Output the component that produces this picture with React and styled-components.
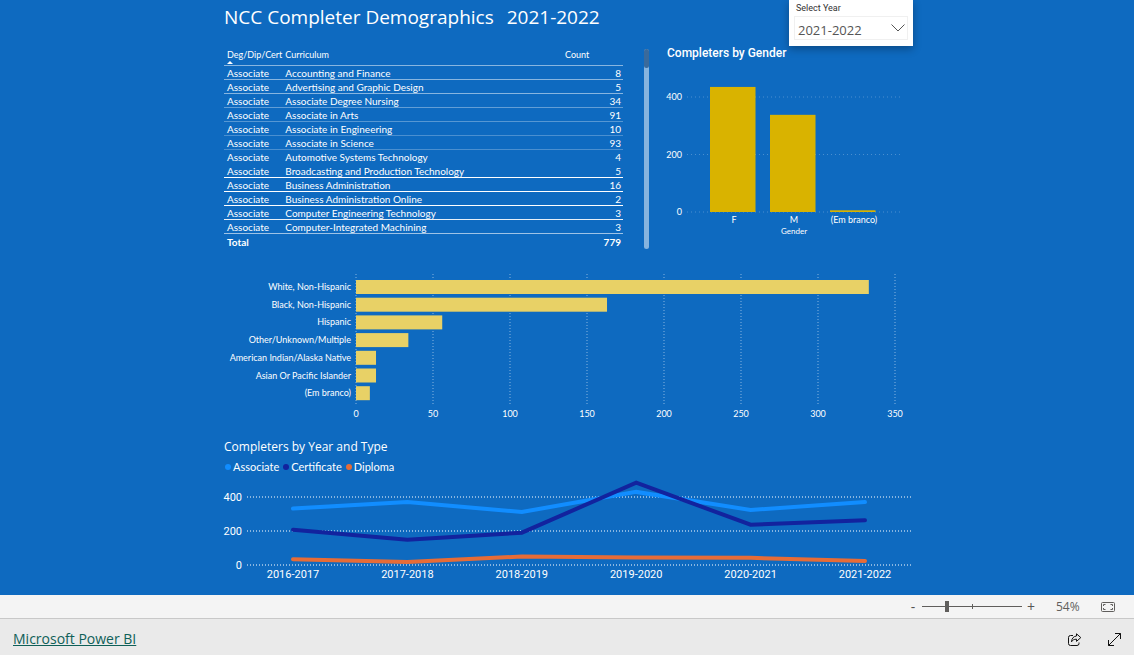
import React, { useState } from 'react';
import styled, { createGlobalStyle } from 'styled-components';

const completers = [
  { name: 'Accounting and Finance', count: 8, line: 0.5 },
  { name: 'Advertising and Graphic Design', count: 5, line: 0.5 },
  { name: 'Associate Degree Nursing', count: 34, line: 0.35 },
  { name: 'Associate in Arts', count: 91, line: 0.3 },
  { name: 'Associate in Engineering', count: 10, line: 0.25 },
  { name: 'Associate in Science', count: 93, line: 0.25 },
  { name: 'Automotive Systems Technology', count: 4, line: 0 },
  { name: 'Broadcasting and Production Technology', count: 5, line: 1 },
  { name: 'Business Administration', count: 16, line: 1 },
  { name: 'Business Administration Online', count: 2, line: 1 },
  { name: 'Computer Engineering Technology', count: 3, line: 0.9 },
  { name: 'Computer-Integrated Machining', count: 3, line: 0.6 },
];

const genders = [
  { label: 'F', value: 435 },
  { label: 'M', value: 338 },
  { label: '(Em branco)', value: 6 },
];

const ethnicities = [
  { label: 'White, Non-Hispanic', value: 333 },
  { label: 'Black, Non-Hispanic', value: 163 },
  { label: 'Hispanic', value: 56 },
  { label: 'Other/Unknown/Multiple', value: 34 },
  { label: 'American Indian/Alaska Native', value: 13 },
  { label: 'Asian Or Pacific Islander', value: 13 },
  { label: '(Em branco)', value: 9 },
];

const years = ['2016-2017', '2017-2018', '2018-2019', '2019-2020', '2020-2021', '2021-2022'];

const series = [
  { label: 'Associate', color: '#118dff', values: [332, 370, 312, 430, 324, 370] },
  { label: 'Certificate', color: '#12239e', values: [208, 148, 190, 484, 237, 263] },
  { label: 'Diploma', color: '#e66c37', values: [34, 18, 50, 44, 42, 24] },
];

const GenderChart = () => {
  const y = (value) => 134 - value * 0.2875;
  return (
    <Chart viewBox="0 0 246 164" role="img" aria-label="Completers by Gender">
      {[0, 200, 400].map((tick) => (
        <g key={tick}>
          <GridLine x1="20" x2="235" y1={y(tick)} y2={y(tick)} $faint />
          <AxisLabel x="15" y={y(tick) + 3} textAnchor="end">{tick}</AxisLabel>
        </g>
      ))}
      {genders.map((item, i) => (
        <g key={item.label}>
          <rect x={43 + i * 60} y={y(item.value)} width="45.5" height={item.value * 0.2875} fill="#d9b300" />
          <AxisLabel x={67 + i * 60} y="145" textAnchor="middle">{item.label}</AxisLabel>
        </g>
      ))}
      <AxisLabel x="127" y="156" textAnchor="middle" $small>Gender</AxisLabel>
    </Chart>
  );
};

const EthnicityChart = () => {
  const x = (value) => 135 + value * 1.54;
  return (
    <Chart viewBox="0 0 692 150" role="img" aria-label="Completers by ethnicity">
      {[0, 50, 100, 150, 200, 250, 300, 350].map((tick) => (
        <g key={tick}>
          <GridLine x1={x(tick)} x2={x(tick)} y1="4" y2="134" />
          <AxisLabel x={x(tick)} y="147" textAnchor="middle">{tick}</AxisLabel>
        </g>
      ))}
      {ethnicities.map((item, i) => (
        <g key={item.label}>
          <rect x="135" y={10 + i * 17.7} width={item.value * 1.54} height="14" fill="#e8d166" />
          <AxisLabel x="130" y={20 + i * 17.7} textAnchor="end">{item.label}</AxisLabel>
        </g>
      ))}
    </Chart>
  );
};

const YearChart = () => {
  const x = (i) => 72 + i * 114.4;
  const y = (value) => 90 - value * 0.17;
  return (
    <Chart viewBox="0 0 692 108" role="img" aria-label="Completers by Year and Type">
      {[400, 200, 0].map((tick) => (
        <g key={tick}>
          <GridLine x1="26" x2="690" y1={y(tick)} y2={y(tick)} $wide />
          <AxisLabel x="21" y={y(tick) + 4} textAnchor="end" $large>{tick}</AxisLabel>
        </g>
      ))}
      {series.map((item) => (
        <SeriesLine
          key={item.label}
          points={item.values.map((value, i) => `${x(i)},${y(value)}`).join(' ')}
          stroke={item.color}
        />
      ))}
      {years.map((year, i) => (
        <AxisLabel key={year} x={x(i)} y="103" textAnchor="middle" $large>{year}</AxisLabel>
      ))}
    </Chart>
  );
};

const App = () => {
  const [year, setYear] = useState('2021-2022');
  const [zoom, setZoom] = useState(54);

  return (
    <Page>
      <GlobalStyle />
      <Canvas>
        <Report>
          <TopRow>
            <Left>
              <Title>
                NCC Completer Demographics <span>{year}</span>
              </Title>
              <TableArea>
                <Table>
                  <thead>
                    <tr>
                      <HeadCell $width="57px">
                        Deg/Dip/Cert
                        <SortMark viewBox="0 0 6 3"><path d="M0 3 3 0l3 3z" /></SortMark>
                      </HeadCell>
                      <HeadCell>Curriculum</HeadCell>
                      <HeadCell $width="61px">Count</HeadCell>
                    </tr>
                  </thead>
                  <tbody>
                    {completers.map((item) => (
                      <tr key={item.name}>
                        <Cell $line={item.line}>Associate</Cell>
                        <Cell $line={item.line}>{item.name}</Cell>
                        <Cell $line={item.line} $right>{item.count}</Cell>
                      </tr>
                    ))}
                  </tbody>
                  <tfoot>
                    <tr>
                      <TotalCell colSpan="2">Total</TotalCell>
                      <TotalCell $right>779</TotalCell>
                    </tr>
                  </tfoot>
                </Table>
                <ScrollTrack><ScrollThumb /></ScrollTrack>
              </TableArea>
            </Left>
            <Right>
              <Slicer>
                <label htmlFor="year">Select Year</label>
                <SelectBox>
                  <select id="year" value={year} onChange={(e) => setYear(e.target.value)}>
                    {years.map((item) => <option key={item}>{item}</option>)}
                  </select>
                  <svg width="14" height="8" viewBox="0 0 14 8"><path d="M.5.5 7 7l6.500-6.500" /></svg>
                </SelectBox>
              </Slicer>
              <GenderTitle>Completers by Gender</GenderTitle>
              <GenderChart />
            </Right>
          </TopRow>
          <EthnicityArea><EthnicityChart /></EthnicityArea>
          <YearTitle>Completers by Year and Type</YearTitle>
          <Legend>
            {series.map((item) => <LegendItem key={item.label} $color={item.color}>{item.label}</LegendItem>)}
          </Legend>
          <YearChart />
        </Report>
      </Canvas>
      <ZoomBar>
        <ZoomButton aria-label="Zoom out" onClick={() => setZoom(Math.max(10, zoom - 10))}>-</ZoomButton>
        <ZoomSlider
          type="range"
          aria-label="Zoom"
          min="6"
          max="206"
          value={zoom}
          onChange={(e) => setZoom(Number(e.target.value))}
        />
        <ZoomButton aria-label="Zoom in" onClick={() => setZoom(Math.min(200, zoom + 10))}>+</ZoomButton>
        <ZoomValue>{zoom}%</ZoomValue>
        <IconButton aria-label="Fit to page">
          <svg width="14" height="10" viewBox="0 0 14 10" stroke="#605e5c">
            <rect x=".5" y=".5" width="13" height="9" rx="1" />
            <path d="M2.500 4V2.500H4.500M9.500 2.500h2V4M11.500 6v1.500h-2M4.500 7.500h-2V6" />
          </svg>
        </IconButton>
      </ZoomBar>
      <Footer>
        <BrandLink href="#powerbi">Microsoft Power BI</BrandLink>
        <FooterIcons>
          <IconButton aria-label="Share">
            <svg width="14" height="13" viewBox="0 0 14 13" stroke="#111">
              <path d="M5 2.500H2.500a2 2 0 0 0-2 2v6a2 2 0 0 0 2 2H9a2 2 0 0 0 2-2V9.500" />
              <path d="M8.500.8 12.800 4.600 8.500 8.400V6.200C6 6.200 4.600 7 3.500 8.800 3.700 5.500 5.500 3.300 8.500 3z" strokeLinejoin="round" />
            </svg>
          </IconButton>
          <IconButton aria-label="Full screen">
            <svg width="13" height="13" viewBox="0 0 13 13" stroke="#111">
              <path d="M7 .5h5.500V6M12.500.5l-12 12M.5 7v5.500H6" />
            </svg>
          </IconButton>
        </FooterIcons>
      </Footer>
    </Page>
  );
};

export default App;

const GlobalStyle = createGlobalStyle`
  * {
    box-sizing: border-box;
  }
  body {
    margin: 0;
    font-family: "Open Sans", "Noto Sans", sans-serif;
  }
`;

const Page = styled.div`
  display: flex;
  flex-direction: column;
  min-height: 100vh;
`;

const Canvas = styled.main`
  flex: 1;
  background-color: #0e6ac0;
  color: #ffffff;
`;

const Report = styled.div`
  width: 100%;
  max-width: 692px;
  margin: 0 auto;
`;

const TopRow = styled.div`
  display: grid;
  grid-template-columns: 430fr 246fr;
  gap: 16px;
`;

const Left = styled.div`
  padding-left: 3px;
`;

const Title = styled.h1`
  margin: 0;
  padding: 3px 0 16px;
  font-size: 19px;
  line-height: 28px;
  font-weight: 400;
  white-space: nowrap;
  & > span {
    margin-left: 8px;
  }
`;

const TableArea = styled.div`
  display: flex;
  align-items: flex-start;
  justify-content: space-between;
  gap: 21px;
`;

const Table = styled.table`
  flex: 1;
  table-layout: fixed;
  border-collapse: separate;
  border-spacing: 0;
  font-family: Lato, "Open Sans", sans-serif;
  font-size: 10px;
  line-height: 11px;
`;

const HeadCell = styled.th`
  width: ${(props) => props.$width || 'auto'};
  height: 19px;
  padding: 2px 0 0 3px;
  border-bottom: 1px solid rgba(255, 255, 255, 0.5);
  font-size: 9px;
  line-height: 12px;
  font-weight: 400;
  text-align: left;
  vertical-align: top;
  white-space: nowrap;
`;

const SortMark = styled.svg`
  display: block;
  width: 6px;
  height: 3px;
  fill: #ffffff;
`;

const Cell = styled.td`
  padding: 2px 2px 0 3px;
  border-bottom: 1px solid rgba(255, 255, 255, ${(props) => props.$line});
  text-align: ${(props) => (props.$right ? 'right' : 'left')};
`;

const TotalCell = styled.td`
  padding: 3px 2px 0 3px;
  font-weight: 700;
  text-align: ${(props) => (props.$right ? 'right' : 'left')};
`;

const ScrollTrack = styled.div`
  width: 5px;
  height: 200px;
  margin: 2px 2px 0 0;
  border-radius: 3px;
  background-color: #86b4df;
`;

const ScrollThumb = styled.div`
  height: 19px;
  border-radius: 3px;
  background-color: #3a6a9b;
`;

const Right = styled.div`
  display: flex;
  flex-direction: column;
`;

const Slicer = styled.div`
  align-self: flex-end;
  width: 124px;
  height: 46px;
  padding: 2px 5px 0;
  background-color: #ffffff;
  box-shadow: 0 3px 8px rgba(0, 0, 0, 0.3);
  & > label {
    display: block;
    padding-left: 2px;
    color: #333333;
    font-family: Roboto, sans-serif;
    font-size: 9px;
    line-height: 12px;
  }
`;

const SelectBox = styled.div`
  display: flex;
  align-items: center;
  height: 24px;
  margin-top: 2px;
  padding-right: 2px;
  border: 1px solid #f0f0f0;
  & > select {
    flex: 1;
    min-width: 0;
    padding: 4px 0 0 3px;
    border: 0;
    appearance: none;
    background: transparent;
    color: #555555;
    font-family: inherit;
    font-size: 13px;
    line-height: 20px;
  }
  & > svg {
    fill: none;
    stroke: #555555;
  }
`;

const GenderTitle = styled.h2`
  margin: 0;
  padding-bottom: 18px;
  font-family: Roboto, sans-serif;
  font-size: 12px;
  line-height: 14px;
  font-weight: 500;
`;

const Chart = styled.svg`
  display: block;
  width: 100%;
  overflow: visible;
`;

const GridLine = styled.line`
  stroke: #ffffff;
  stroke-width: ${(props) => (props.$wide ? 2 : 1)};
  stroke-opacity: ${(props) => (props.$faint ? 0.25 : 0.5)};
  stroke-dasharray: ${(props) => (props.$faint ? '1 3' : '1 2')};
`;

const AxisLabel = styled.text`
  fill: #ffffff;
  font-family: ${(props) => (props.$large ? 'Roboto' : 'Lato')}, "Open Sans", sans-serif;
  font-size: ${(props) => (props.$large ? 11 : props.$small ? 8 : 9)}px;
`;

const SeriesLine = styled.polyline`
  fill: none;
  stroke-width: 4px;
  stroke-linecap: round;
  stroke-linejoin: miter;
`;

const EthnicityArea = styled.div`
  padding-top: 21px;
`;

const YearTitle = styled.h2`
  margin: 0;
  padding: 18px 0 0 3px;
  font-size: 12px;
  line-height: 18px;
  font-weight: 400;
`;

const Legend = styled.div`
  display: flex;
  gap: 4px;
  padding: 3px 0 0 4px;
  font-family: Lato, "Open Sans", sans-serif;
  font-size: 11px;
  line-height: 16px;
`;

const LegendItem = styled.span`
  display: flex;
  align-items: center;
  gap: 2px;
  &::before {
    content: '';
    width: 6px;
    height: 6px;
    border-radius: 50%;
    background-color: ${(props) => props.$color};
  }
`;

const ZoomBar = styled.div`
  display: flex;
  align-items: center;
  justify-content: flex-end;
  height: 23px;
  padding-right: 19px;
  background-color: #f4f4f4;
`;

const ZoomButton = styled.button`
  width: 18px;
  padding: 0;
  border: 0;
  background: none;
  color: #555555;
  font-family: inherit;
  font-size: 14px;
  line-height: 20px;
`;

const ZoomSlider = styled.input`
  width: 100px;
  height: 12px;
  margin: 0;
  appearance: none;
  background:
    linear-gradient(#605e5c, #605e5c) center / 1px 5px no-repeat,
    linear-gradient(#605e5c, #605e5c) center / 100% 1px no-repeat;
  &::-webkit-slider-thumb {
    appearance: none;
    width: 4px;
    height: 11px;
    background-color: #605e5c;
  }
`;

const ZoomValue = styled.span`
  width: 61px;
  padding-left: 16px;
  color: #605e5c;
  font-size: 12px;
`;

const IconButton = styled.button`
  display: flex;
  padding: 0;
  border: 0;
  background: none;
  & > svg {
    fill: none;
  }
`;

const Footer = styled.footer`
  display: flex;
  align-items: center;
  justify-content: space-between;
  height: 37px;
  padding: 4px 13px 0;
  border-top: 1px solid #c8c8c8;
  background-color: #eaeaea;
`;

const BrandLink = styled.a`
  color: #0f6058;
  font-size: 14px;
  line-height: 20px;
`;

const FooterIcons = styled.div`
  display: flex;
  gap: 26px;
`;
